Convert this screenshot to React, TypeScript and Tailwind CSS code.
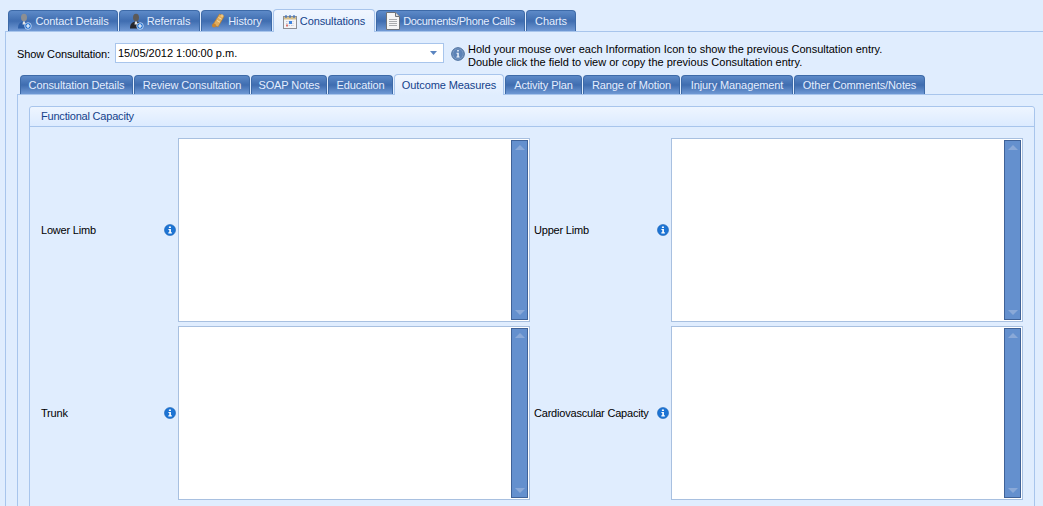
const font = "font-['Liberation_Sans',sans-serif] text-[11px]";

const PersonIcon = ({ dark }: { dark?: boolean }) => (
  <svg width="15" height="17" viewBox="0 0 15 17" className="shrink-0">
    <ellipse cx="7" cy="4.500" rx="3" ry="3.800" fill={dark ? "#5d5a58" : "#8d8f92"} />
    <path d="M1 15.500c0-5 2.500-7 6-7s6 2 6 7z" fill={dark ? "#26262c" : "#2d5fa8"} />
    <path d="M6 8.500h2l.5 3h-3z" fill="#e4e4e4" />
    <circle cx="11" cy="13" r="3.300" fill="#1f6fd0" stroke="#e6f0ff" strokeWidth=".7" />
    <path d="M11 11v4M9 13h4" stroke="#fff" strokeWidth="1.200" />
  </svg>
);

const ScrollIcon = () => (
  <svg width="14" height="16" viewBox="0 0 14 16" className="shrink-0">
    <path d="M8.500 1l4.500 2.500-6 10.500-5-2.500z" fill="#e0ac5c" stroke="#b57a2a" strokeWidth=".6" />
    <path d="M7.500 4.500l3 1.700M6 7.500l3 1.700" stroke="#f6dca6" />
    <circle cx="3" cy="12.500" r="2" fill="#c9852f" />
    <circle cx="11" cy="2.800" r="1.500" fill="#f0c478" />
  </svg>
);

const CalendarIcon = () => (
  <svg width="14" height="15" viewBox="0 0 14 15" className="shrink-0">
    <rect x=".5" y="2.500" width="13" height="12" fill="#f4f4f6" stroke="#8c8f96" />
    <rect x="1" y="3" width="12" height="2.500" fill="#d8c08a" />
    <path d="M3 1v3M7 1v3M11 1v3" stroke="#3a70c0" strokeWidth="1.200" />
    <path d="M3 7.500h8M3 9.500h8M3 11.500h8" stroke="#c3c8d8" strokeDasharray="1.500 1" />
    <rect x="6" y="7" width="3" height="3" fill="#3f84e0" />
    <rect x="3" y="10.500" width="2" height="2" fill="#d9726c" />
  </svg>
);

const DocIcon = () => (
  <svg width="14" height="18" viewBox="0 0 14 18" className="shrink-0">
    <path d="M.500 .500h9l4 4v13H.500z" fill="#f5f5f5" stroke="#6e7278" />
    <path d="M9.500 .500v4h4" fill="#dcdcdc" stroke="#6e7278" />
    <path d="M3 7.500h8M3 9.500h8M3 11.500h8M3 13.500h8" stroke="#a9abae" />
  </svg>
);

const InfoDot = () => (
  <svg width="12" height="12" viewBox="0 0 13 13" className="shrink-0">
    <circle cx="6.500" cy="6.500" r="6" fill="#1d74d4" stroke="#1a62b4" strokeWidth=".6" />
    <path d="M5.300 2.600h2.200v1.800H5.300zM4.800 5.300h2.700v3.700h1v1.300H4.700V9h1V6.500h-.9z" fill="#fff" />
  </svg>
);

const InfoLarge = () => (
  <svg width="14" height="14" viewBox="0 0 14 14" className="shrink-0">
    <circle cx="7" cy="7" r="6.300" fill="#7f9dc6" stroke="#3f6596" />
    <circle cx="7" cy="7" r="4.800" fill="#5c82b6" />
    <path d="M6.200 3h1.600v1.500H6.200zM5.500 5.700h2.300v3.700h.8v1H5.400v-1h.9V6.700h-.8z" fill="#eef3fa" />
  </svg>
);

const topTabs = [
  { label: "Contact Details", width: "w-[110px]", icon: <PersonIcon /> },
  { label: "Referrals", width: "w-[81px]", icon: <PersonIcon dark /> },
  { label: "History", width: "w-[71px]", icon: <ScrollIcon /> },
  { label: "Consultations", width: "w-[102px]", icon: <CalendarIcon />, active: true },
  { label: "Documents/Phone Calls", width: "w-[149px]", icon: <DocIcon />, tight: true },
  { label: "Charts", width: "w-[50px]" },
];

const subTabs = [
  { label: "Consultation Details", width: "w-[113px]" },
  { label: "Review Consultation", width: "w-[116px]" },
  { label: "SOAP Notes", width: "w-[76px]" },
  { label: "Education", width: "w-[65px]" },
  { label: "Outcome Measures", width: "w-[110px]", active: true },
  { label: "Activity Plan", width: "w-[77px]" },
  { label: "Range of Motion", width: "w-[97px]" },
  { label: "Injury Management", width: "w-[112px]" },
  { label: "Other Comments/Notes", width: "w-[131px]" },
];

type TabProps = { label: string; width: string; icon?: React.ReactNode; active?: boolean; tight?: boolean; small?: boolean };

const Tab = ({ label, width, icon, active, tight, small }: TabProps) =>
  active ? (
    <div className={`${width} ${small ? "h-[21px]" : "h-[23px]"} relative z-10 -mb-px flex shrink-0 items-center justify-center gap-[3px] rounded-t-[4px] border border-b-0 border-[#a8c5ec] bg-gradient-to-b from-[#f0f6ff] to-[#e0edfe] tracking-[-0.1px] text-[#15428b]`}>
      {icon}
      {label}
    </div>
  ) : (
    <div className={`${width} ${small ? "h-[19px]" : "h-[21px]"} ${tight ? "tracking-[-0.3px]" : "tracking-[-0.1px]"} flex shrink-0 items-center justify-center gap-[3px] rounded-t-[4px] border border-b-0 border-[#3d6aa8] bg-gradient-to-b from-[#5d8ac8] via-[#3f6db0] to-[#7099d4] text-[#e4eeff]`}>
      {icon}
      {label}
    </div>
  );

const Arrow = ({ down }: { down?: boolean }) => (
  <svg width="10" height="5" viewBox="0 0 10 5">
    <path d={down ? "M0 0h10L5 5z" : "M0 5h10L5 0z"} fill="#8aa9d8" />
  </svg>
);

const TextBox = () => (
  <div className="flex justify-end border border-[#a8c0e0] bg-white p-px">
    <div className="flex w-[17px] flex-col items-center justify-between border border-[#3f6298] bg-[#6490ce] py-[4px]">
      <Arrow />
      <Arrow down />
    </div>
  </div>
);

const FieldLabel = ({ text, right }: { text: string; right?: boolean }) => (
  <div className={`flex items-center justify-between pr-[2px] tracking-[-0.2px] text-black ${right ? "pl-[4px]" : "pl-[11px]"}`}>
    <span>{text}</span>
    <InfoDot />
  </div>
);

export default function App() {
  return (
    <div className={`${font} h-[506px] w-[1043px] overflow-hidden bg-[#e0edfe] text-black`}>
      <div className="flex h-[31px] items-end gap-px pl-[8px]">
        {topTabs.map((t) => (
          <Tab key={t.label} {...t} />
        ))}
      </div>

      <div className="ml-[5px] border-l border-t border-[#a8c5ec] pt-[11px]">
        <div className="flex h-[32px] items-start">
          <span className="ml-[11px] w-[98px] pt-[3px] tracking-[-0.1px]">Show Consultation:</span>
          <div className="flex h-[20px] w-[329px] items-center justify-between border border-[#a8c5ec] bg-white pl-[2px] pr-[6px]">
            <span>15/05/2012 1:00:00 p.m.</span>
            <svg width="7" height="4" viewBox="0 0 7 4">
              <path d="M0 0h7L3.500 4z" fill="#5a84c0" />
            </svg>
          </div>
          <div className="ml-[7px] mt-[4px]">
            <InfoLarge />
          </div>
          <div className="ml-[3px] leading-[13px]">
            <div>Hold your mouse over each Information Icon to show the previous Consultation entry.</div>
            <div>Double click the field to view or copy the previous Consultation entry.</div>
          </div>
        </div>

        <div className="flex h-[19px] items-end gap-px pl-[14px]">
          {subTabs.map((t) => (
            <Tab key={t.label} {...t} small />
          ))}
        </div>

        <div className="ml-[11px] border-l border-t border-[#a8c5ec] pl-[11px] pt-[11px]">
          <div className="w-[1006px] rounded-t-[3px] border border-[#a8c5ec]">
            <div className="flex h-[20px] items-center rounded-t-[3px] border-b border-[#a8c5ec] bg-gradient-to-b from-[#eef5ff] to-[#dcebff] pl-[11px] tracking-[-0.2px] text-[#15428b]">
              Functional Capacity
            </div>
            <div className="grid grid-cols-[148px_352px_141px_352px] grid-rows-[184px_174px] gap-y-[4px] pb-[12px] pt-[11px]">
              <FieldLabel text="Lower Limb" />
              <TextBox />
              <FieldLabel text="Upper Limb" right />
              <TextBox />
              <FieldLabel text="Trunk" />
              <TextBox />
              <FieldLabel text="Cardiovascular Capacity" right />
              <TextBox />
            </div>
          </div>
        </div>
      </div>
    </div>
  );
}
